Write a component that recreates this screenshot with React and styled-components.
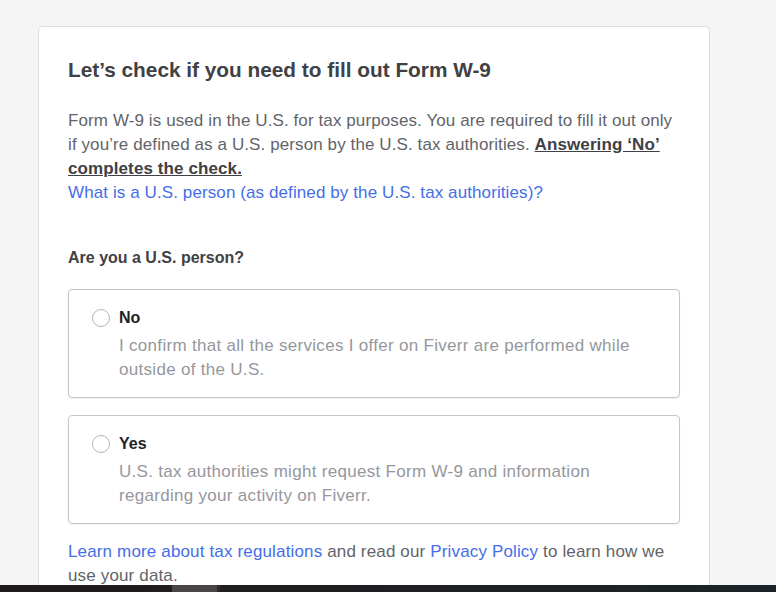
import React from 'react';
import styled, { createGlobalStyle } from 'styled-components';

const GlobalStyle = createGlobalStyle`
  html, body {
    margin: 0;
    padding: 0;
    background: #f5f5f5;
    font-family: "Liberation Sans", Arial, sans-serif;
  }
`;

const Page = styled.div`
  padding: 26px 0 0 38px;
  height: 566px;
  overflow: hidden;
`;

const Card = styled.div`
  width: 612px;
  background: #fff;
  border: 1px solid #dedfe1;
  border-bottom: none;
  border-radius: 5px 5px 0 0;
  padding: 29px 29px 40px 29px;
`;

const Title = styled.h1`
  margin: 0;
  font-size: 20.8px;
  line-height: 28px;
  font-weight: 700;
  color: #404145;
`;

const Body = styled.p`
  font-size: 17px;
  line-height: 24px;
  letter-spacing: 0.1px;
  color: #62646a;
`;

const Intro = styled(Body)`
  margin: 25px 0 0;
`;

const Strong = styled.span`
  font-weight: 700;
  color: #404145;
  text-decoration: underline;
`;

const Link = styled.a`
  color: #446ee7;
  text-decoration: none;
  cursor: pointer;
`;

const Question = styled.h2`
  margin: 41px 0 19px;
  font-size: 16px;
  line-height: 24px;
  font-weight: 700;
  color: #404145;
`;

const Options = styled.div`
  display: flex;
  flex-direction: column;
  gap: 17px;
`;

const Option = styled.label`
  display: grid;
  grid-template-columns: 18px 1fr;
  column-gap: 9px;
  padding: 16px 24px 15px 23px;
  border: 1px solid #c5c6c9;
  border-radius: 4px;
  box-shadow: 0 1px 2px rgba(0, 0, 0, 0.06);
  cursor: pointer;
`;

const Radio = styled.span`
  width: 16px;
  height: 16px;
  margin-top: 3px;
  border: 1px solid #b5b6ba;
  border-radius: 50%;
  background: #fff;
`;

const OptionTitle = styled.span`
  font-size: 16px;
  line-height: 24px;
  font-weight: 700;
  color: #222325;
`;

const OptionText = styled.span`
  grid-column: 2;
  margin-top: 4px;
  font-size: 17px;
  line-height: 24px;
  letter-spacing: 0.3px;
  color: #95979d;
`;

const Footer = styled(Body)`
  margin: 16px 0 0;
  letter-spacing: 0.15px;
`;

const TaskBar = styled.div`
  position: fixed;
  left: 0;
  right: 0;
  bottom: 0;
  height: 7px;
  display: flex;
  background: linear-gradient(90deg, #201a1b 0%, #1e1f22 50%, #1b2428 100%);
`;

const TaskSpace = styled.div`
  width: ${(p) => p.w}px;
`;

const TaskItem = styled.div`
  width: 45px;
  background: #4a4446;
  border-right: 3px solid #2e2a2b;
`;

const options = [
  {
    id: 'no',
    title: 'No',
    text: 'I confirm that all the services I offer on Fiverr are performed while outside of the U.S.',
  },
  {
    id: 'yes',
    title: 'Yes',
    text: 'U.S. tax authorities might request Form W-9 and information regarding your activity on Fiverr.',
  },
];

export default function App() {
  return (
    <>
      <GlobalStyle />
      <Page>
        <Card>
          <Title>Let’s check if you need to fill out Form W-9</Title>
          <Intro>
            Form W-9 is used in the U.S. for tax purposes. You are required to fill it out only
            if you’re defined as a U.S. person by the U.S. tax authorities.{' '}
            <Strong>Answering ‘No’ completes the check.</Strong>
            <br />
            <Link>What is a U.S. person (as defined by the U.S. tax authorities)?</Link>
          </Intro>
          <Question>Are you a U.S. person?</Question>
          <Options>
            {options.map((o) => (
              <Option key={o.id}>
                <Radio />
                <OptionTitle>{o.title}</OptionTitle>
                <OptionText>{o.text}</OptionText>
              </Option>
            ))}
          </Options>
          <Footer>
            <Link>Learn more about tax regulations</Link> and read our{' '}
            <Link>Privacy Policy</Link> to learn how we use your data.
          </Footer>
        </Card>
      </Page>
      <TaskBar>
        <TaskSpace w={172} />
        <TaskItem />
      </TaskBar>
    </>
  );
}
